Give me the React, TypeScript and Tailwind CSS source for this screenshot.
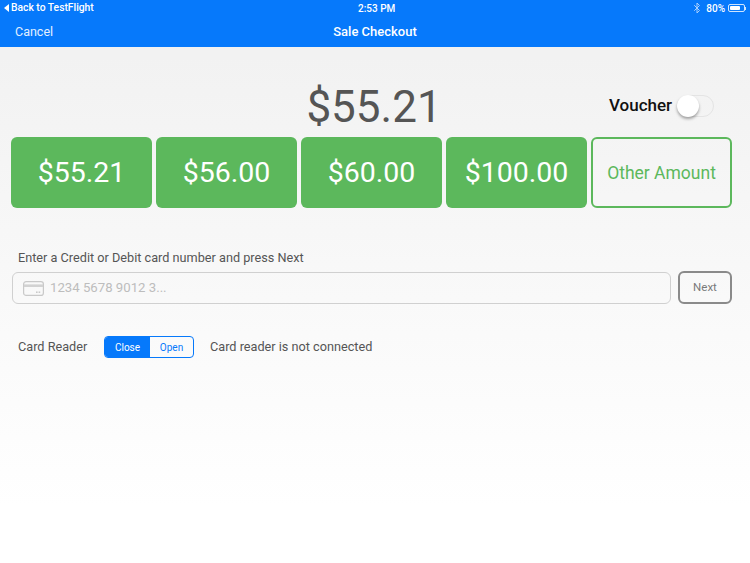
import React from "react";
import { Bluetooth } from "lucide-react";

const amounts = ["$55.21", "$56.00", "$60.00", "$100.00"];

const CardIcon = () => (
  <svg width="21" height="15" viewBox="0 0 21 15" fill="none" className="shrink-0">
    <rect x="0.6" y="0.6" width="19.8" height="13.8" rx="2.5" stroke="#c9c9c9" strokeWidth="1.2" />
    <rect x="1" y="3.4" width="19" height="2.6" fill="#d2d2d2" />
    <rect x="13" y="10.5" width="1.6" height="1.4" fill="#c4c4c4" />
    <rect x="15.6" y="10.5" width="1.6" height="1.4" fill="#c4c4c4" />
  </svg>
);

const App = () => {
  return (
    <div className="w-[750px] h-[563px] overflow-hidden bg-gradient-to-b from-[#f2f2f2] from-[10%] to-white to-[90%] font-['Roboto',sans-serif]">
      <header className="h-[47px] bg-[#0679fb] text-white">
        <div className="h-[16px] flex items-center justify-between px-[4px] text-[10px] relative">
          <div className="flex items-center gap-[1px] font-medium">
            <svg width="6" height="8" viewBox="0 0 6 8"><path d="M5 0v8L0 4z" fill="#fff" /></svg>
            <span className="text-[10.3px]">Back to TestFlight</span>
          </div>
          <span className="absolute left-[358px] font-medium text-[10px]">2:53 PM</span>
          <div className="flex items-center gap-[2px] font-medium text-[10px]">
            <Bluetooth size={12} className="text-[#a9d0fd] mr-[1px]" />
            <span>80%</span>
            <div className="flex items-center ml-[1px]">
              <div className="w-[17px] h-[8px] rounded-[2px] border border-white/80 p-[1px]">
                <div className="w-[80%] h-full bg-white rounded-[1px]" />
              </div>
              <div className="w-[1px] h-[3px] bg-white/80" />
            </div>
          </div>
        </div>
        <div className="h-[31px] flex items-center relative pl-[15px] text-[12.5px]">
          <span className="text-[#e3f0ff] pt-[1px]">Cancel</span>
          <span className="absolute inset-x-0 text-center font-medium text-[13px]">Sale Checkout</span>
        </div>
      </header>

      <div className="h-[90px] relative flex justify-center items-start">
        <span className="mt-[34px] text-[44px] leading-[52px] text-[#555] translate-x-[-1px]">$55.21</span>
        <div className="absolute left-[609px] top-[46px] flex items-center gap-[4px]">
          <span className="w-[64px] text-[17px] font-medium text-[#111]">Voucher</span>
          <div className="relative w-[37px] h-[22px] rounded-full border border-[#e4e4e4]">
            <div className="absolute left-[-1px] top-[-1px] w-[22px] h-[22px] rounded-full bg-white shadow-[0_2px_3px_rgba(0,0,0,0.35)]" />
          </div>
        </div>
      </div>

      <div className="flex gap-[4px] pl-[11px] pr-[18px]">
        {amounts.map((a) => (
          <button key={a} className="w-[141px] h-[71px] rounded-[6px] bg-[#5cb85c] text-white text-[28.5px] pt-[2px]">
            {a}
          </button>
        ))}
        <button className="w-[141px] h-[71px] rounded-[6px] border-2 border-[#5cb85c] text-[#5cb85c] text-[17.5px] pt-[1px]">
          Other Amount
        </button>
      </div>

      <div className="mt-[42px] pl-[18px] text-[12.7px] leading-[16px] text-[#555]">
        Enter a Credit or Debit card number and press Next
      </div>

      <div className="mt-[5px] flex gap-[7px] pl-[12px] pr-[18px]">
        <div className="mt-[1px] w-[659px] h-[32px] rounded-[6px] border border-[#d0d0d0] flex items-center gap-[6px] pl-[10px]">
          <CardIcon />
          <span className="text-[13.2px] text-[#bdbdbd]">1234 5678 9012 3...</span>
        </div>
        <button className="w-[54px] h-[33px] rounded-[6px] border-2 border-[#8a8a8a] text-[11.5px] text-[#7a7a7a]">
          Next
        </button>
      </div>

      <div className="mt-[32px] flex items-center pl-[18px] text-[12.7px] text-[#555]">
        <span className="w-[86px]">Card Reader</span>
        <div className="flex w-[90px] h-[22px] rounded-[4px] border border-[#0679fb] overflow-hidden text-[10px]">
          <div className="w-[45px] bg-[#0679fb] text-white flex items-center justify-center">Close</div>
          <div className="flex-1 text-[#0679fb] flex items-center justify-center">Open</div>
        </div>
        <span className="ml-[16px]">Card reader is not connected</span>
      </div>
    </div>
  );
};

export default App;
